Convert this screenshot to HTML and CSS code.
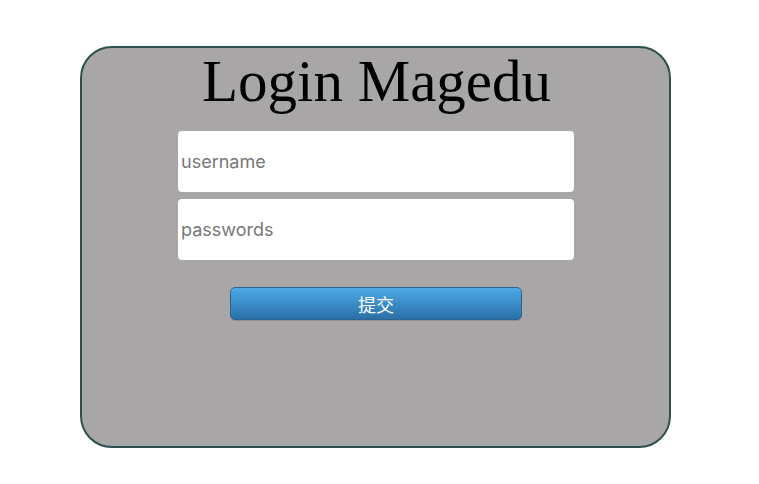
FILE: index.html
```html
<!DOCTYPE html>
<html>
<head>
<meta charset="utf-8">
<link rel="stylesheet" href="styles.css">
</head>
<body>
<div class="card">
  <h1 class="title">Login Magedu</h1>
  <form class="form">
    <input class="field" type="text" placeholder="username">
    <input class="field" type="password" placeholder="passwords">
    <button class="submit" type="button">提交</button>
  </form>
</div>
</body>
</html>
```
FILE: styles.css
```css
html, body {
  margin: 0;
  padding: 0;
  background: #ffffff;
}
body {
  padding: 46px 0 0 80px;
}
.card {
  box-sizing: border-box;
  width: 591px;
  height: 402px;
  border: 2px solid #2f4f4f;
  border-radius: 32px;
  background: #a8a6a7;
  padding-top: 0;
  display: flex;
  flex-direction: column;
  align-items: center;
}
.title {
  margin: 0;
  font-family: "Liberation Serif", "Times New Roman", serif;
  font-weight: normal;
  font-size: 59px;
  line-height: 67px;
  color: #000;
  position: relative;
  left: 1px;
}
.form {
  margin: 16px 0 0 0;
  display: flex;
  flex-direction: column;
  align-items: center;
}
.field {
  box-sizing: border-box;
  width: 396px;
  height: 61px;
  margin: 0 0 7px 1px;
  border: none;
  border-radius: 4px;
  background: #ffffff;
  padding: 0 3px;
  font-family: Inter, "Noto Sans", sans-serif;
  font-size: 18px;
  color: #333;
  outline: none;
}
.field::placeholder {
  color: #777777;
}
.submit {
  box-sizing: border-box;
  margin-top: 20px;
  margin-left: 1px;
  width: 292px;
  height: 33px;
  border: 1px solid #2b6595;
  border-radius: 5px;
  background: linear-gradient(to bottom, #4ea9e4 0%, #3b8dc9 50%, #2c6fa5 100%);
  color: #ffffff;
  font-family: "Noto Sans CJK SC", sans-serif;
  font-size: 18px;
  line-height: 1;
  padding: 0;
  box-shadow: 0 1px 1px rgba(0,0,0,0.15);
}
```
